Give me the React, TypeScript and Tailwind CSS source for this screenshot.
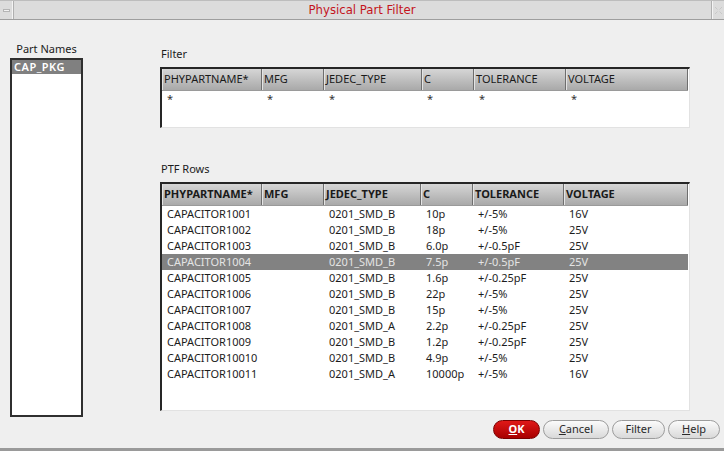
import React from "react";

const rows = [
  ["CAPACITOR1001", "", "0201_SMD_B", "10p", "+/-5%", "16V"],
  ["CAPACITOR1002", "", "0201_SMD_B", "18p", "+/-5%", "25V"],
  ["CAPACITOR1003", "", "0201_SMD_B", "6.0p", "+/-0.5pF", "25V"],
  ["CAPACITOR1004", "", "0201_SMD_B", "7.5p", "+/-0.5pF", "25V"],
  ["CAPACITOR1005", "", "0201_SMD_B", "1.6p", "+/-0.25pF", "25V"],
  ["CAPACITOR1006", "", "0201_SMD_B", "22p", "+/-5%", "25V"],
  ["CAPACITOR1007", "", "0201_SMD_B", "15p", "+/-5%", "25V"],
  ["CAPACITOR1008", "", "0201_SMD_A", "2.2p", "+/-0.25pF", "25V"],
  ["CAPACITOR1009", "", "0201_SMD_B", "1.2p", "+/-0.25pF", "25V"],
  ["CAPACITOR10010", "", "0201_SMD_B", "4.9p", "+/-5%", "25V"],
  ["CAPACITOR10011", "", "0201_SMD_A", "10000p", "+/-5%", "16V"],
];

const headers = ["PHYPARTNAME*", "MFG", "JEDEC_TYPE", "C", "TOLERANCE", "VOLTAGE"];

const HeaderRow = ({ bold, cols }: { bold?: boolean; cols: string }) => (
  <div
    className={`grid ${cols} h-[22px] bg-gradient-to-b from-[#d6d6d6] to-[#a9a9a9] border-b border-[#9a9a9a]`}
  >
    {headers.map((h, i) => (
      <div
        key={i}
        className={`flex items-center pl-[2px] border-r border-[#6e6e6e] shadow-[inset_1px_0_0_#e4e4e4] text-[#1a1a1a] ${
          bold ? "font-bold" : ""
        }`}
      >
        {h}
      </div>
    ))}
  </div>
);

const Button = ({
  children,
  primary,
  width,
}: {
  children: React.ReactNode;
  primary?: boolean;
  width: string;
}) => (
  <button
    className={`${width} h-[19px] rounded-full flex items-center justify-center text-[11px] ${
      primary
        ? "bg-gradient-to-b from-[#e01818] to-[#a80000] border border-[#7a0000] text-white font-bold"
        : "bg-gradient-to-b from-[#fbfbfb] to-[#d9d9d9] border border-[#9c9c9c] text-[#2a2a2a]"
    }`}
  >
    {children}
  </button>
);

export default function App() {
  return (
    <div
      className="w-[724px] h-[451px] bg-[#efefef] flex flex-col overflow-hidden text-[11px] text-[#1c1c1c]"
      style={{ fontFamily: '"Noto Sans", "Open Sans", sans-serif' }}
    >
      {/* title bar */}
      <div className="h-[20px] flex bg-[#dcdcdc] border-t border-[#bdbdbd] border-b border-b-[#9e9e9e]">
        <div className="w-[13px] border-r border-[#f4f4f4] shadow-[1px_0_0_#b0b0b0] flex items-center justify-center">
          <div className="w-[7px] h-[3px] bg-[#f2f2f2] border border-[#b4b4b4]" />
        </div>
        <div
          className="flex-1 flex items-center justify-center text-[13px] text-[#c4141c]"
          style={{ fontFamily: '"DejaVu Sans Condensed", "Liberation Sans Narrow", sans-serif' }}
        >
          Physical Part Filter
        </div>
        <div className="w-[13px] border-l border-[#b0b0b0] shadow-[inset_1px_0_0_#f4f4f4] flex items-center justify-center">
          <svg width="9" height="9" viewBox="0 0 9 9">
            <path d="M1 1 L3.5 3.5 M8 1 L5.5 3.5 M1 8 L3.5 5.5 M8 8 L5.5 5.5" stroke="#c8c8c8" strokeWidth="1" fill="none" />
          </svg>
        </div>
      </div>

      {/* body */}
      <div className="flex-1 flex">
        {/* part names */}
        <div className="ml-[10px] w-[73px] flex flex-col">
          <div className="h-[38px] flex items-end justify-center pb-[1px]">Part Names</div>
          <div className="h-[359px] bg-white border-2 border-[#2f2f2f]">
            <div className="h-[14px] bg-[#808080] text-white font-semibold pl-[2px] leading-[14px] tracking-[0.5px]">
              CAP_PKG
            </div>
          </div>
        </div>

        {/* tables */}
        <div className="ml-[77px] w-[530px] flex flex-col">
          <div className="h-[47px] flex items-end pl-[1px] pb-[5px]">Filter</div>
          <div className="h-[61px] bg-white border-t-2 border-l-2 border-[#262626] border-r border-b border-r-[#e2e2e2] border-b-[#e2e2e2] pr-[1px]">
            <HeaderRow cols="grid-cols-[100px_62px_98px_52px_92px_1fr]" />
            <div className="grid grid-cols-[100px_62px_98px_52px_92px_1fr] h-[16px] items-center">
              {headers.map((_, i) => (
                <div key={i} className="pl-[5px] text-[#333]">*</div>
              ))}
            </div>
          </div>

          <div className="h-[54px] flex items-end pl-[1px] pb-[5px]">PTF Rows</div>
          <div className="h-[229px] bg-white border-t-2 border-l-2 border-[#262626] border-r border-b border-r-[#e2e2e2] border-b-[#e2e2e2] pr-[1px]">
            <HeaderRow bold cols="grid-cols-[100px_62px_97px_52px_91px_1fr]" />
            {rows.map((r, i) => (
              <div
                key={i}
                className={`grid grid-cols-[100px_62px_97px_52px_91px_1fr] h-[16px] items-center ${
                  i === 3 ? "bg-[#828282] text-[#e4e4e4]" : ""
                }`}
              >
                {r.map((c, j) => (
                  <div key={j} className="pl-[5px] whitespace-nowrap">
                    {c}
                  </div>
                ))}
              </div>
            ))}
          </div>
        </div>
      </div>

      {/* buttons */}
      <div className="h-[34px] flex items-start justify-end gap-[3px] pr-[4px] pt-[3px]">
        <Button primary width="w-[47px]">
          <span className="underline">O</span>K
        </Button>
        <Button width="w-[66px]">
          <span className="underline">C</span>ancel
        </Button>
        <Button width="w-[53px]">Filter</Button>
        <Button width="w-[52px]">
          <span className="underline">H</span>elp
        </Button>
      </div>
      <div className="h-[3px] bg-[#9a9a9a]" />
    </div>
  );
}
